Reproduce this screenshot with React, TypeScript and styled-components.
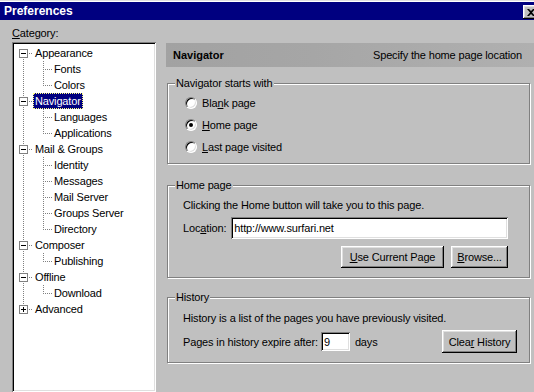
import React from 'react';
import styled, { createGlobalStyle } from 'styled-components';

const GlobalStyle = createGlobalStyle`
  html, body { margin: 0; padding: 0; background: #c0c0c0; }
  body {
    font-family: "Liberation Sans", Arial, sans-serif;
    font-size: 11px;
    letter-spacing: -0.15px;
    color: #000;
  }
  * { box-sizing: border-box; }
`;

const raised = `
  box-shadow: inset -1px -1px #000, inset 1px 1px #fff, inset -2px -2px #808080, inset 2px 2px #dfdfdf;
`;
const sunken = `
  box-shadow: inset 1px 1px #808080, inset -1px -1px #fff, inset 2px 2px #000, inset -2px -2px #dfdfdf;
`;

const dotV = 'repeating-linear-gradient(to bottom, #808080 0 1px, transparent 1px 2px)';
const dotH = 'repeating-linear-gradient(to right, #808080 0 1px, transparent 1px 2px)';

type VLine = 'full' | 'top' | 'bottom' | 'none';

function lines(x: number, w: number, v: VLine, h: boolean) {
    const layers: string[] = [];
    if (v === 'full') layers.push(`${dotV} ${x}px 0 / 1px 100% no-repeat`);
    if (v === 'top') layers.push(`${dotV} ${x}px 0 / 1px 8px no-repeat`);
    if (v === 'bottom') layers.push(`${dotV} ${x}px 8px / 1px 8px no-repeat`);
    if (h) layers.push(`${dotH} ${x}px 8px / ${w - x}px 1px no-repeat`);
    return layers.length ? layers.join(', ') : 'none';
}

const Window = styled.div`
    width: 534px;
    height: 392px;
    overflow: hidden;
    background: #c0c0c0;
    border-top: 1px solid #dfdfdf;
    display: flex;
    flex-direction: column;
`;

const TitleBar = styled.div`
    height: 19px;
    flex: none;
    border-top: 1px solid #fff;
    background: #000080;
    color: #fff;
    display: flex;
    justify-content: space-between;
    padding-left: 4px;
    font-weight: bold;
    font-size: 12px;
    letter-spacing: 0;
    line-height: 18px;
`;

const CloseButton = styled.div`
    width: 16px;
    height: 14px;
    margin: 3px -5px 0 0;
    background: #c0c0c0;
    ${raised}
    display: flex;
    align-items: center;
    justify-content: center;
`;

const Body = styled.div`
    flex: 1;
    min-height: 0;
    display: flex;
    gap: 10px;
    padding: 7px 0 0 12px;
`;

const LeftCol = styled.div`
    width: 144px;
    display: flex;
    flex-direction: column;
`;

const CategoryLabel = styled.div`
    height: 13px;
    line-height: 13px;
    margin-bottom: 2px;
`;

const TreeBox = styled.div`
    flex: 1;
    background: #fff;
    ${sunken}
    padding: 3px 0 0 5px;
`;

const TreeRow = styled.div`
    height: 16px;
    display: flex;
`;

const Cell = styled.span<{ $w: number; $x: number; $v: VLine; $h: boolean }>`
    flex: none;
    width: ${p => p.$w}px;
    height: 16px;
    background: ${p => lines(p.$x, p.$w, p.$v, p.$h)};
    display: flex;
    align-items: flex-start;
`;

const Expander = styled.svg`
    margin: 4px 0 0 2px;
    display: block;
`;

const NodeLabel = styled.span<{ $selected?: boolean }>`
    height: 16px;
    line-height: 14px;
    padding: 0 1px;
    white-space: nowrap;
    border: 1px dotted ${p => (p.$selected ? '#ffff80' : 'transparent')};
    background: ${p => (p.$selected ? '#000080' : 'transparent')};
    color: ${p => (p.$selected ? '#fff' : '#000')};
`;

const RightCol = styled.div`
    flex: 1;
    display: flex;
    flex-direction: column;
    padding-top: 16px;
`;

const Header = styled.div`
    height: 24px;
    flex: none;
    display: flex;
    align-items: center;
    justify-content: space-between;
    padding: 0 12px 0 7px;
    background: linear-gradient(to right, #a2a2a2 0%, #a6a6a6 40%, #b0b0b0 100%);
`;

const HeaderTitle = styled.span`
    font-weight: bold;
    letter-spacing: 0;
`;

const Group = styled.fieldset<{ $top: number }>`
    margin: ${p => p.$top}px 4px 0 1px;
    padding: 0;
    min-width: 0;
    border: 1px solid #808080;
    box-shadow: inset 1px 1px #fff, 1px 1px #fff;
`;

const Legend = styled.legend`
    margin-left: 7px;
    padding: 0 1px;
    line-height: 13px;
    background: #c0c0c0;
`;

const GroupInner = styled.div<{ $pad: string }>`
    padding: ${p => p.$pad};
`;

const RadioRow = styled.div`
    height: 22px;
    display: flex;
    align-items: center;
    gap: 5px;
`;

const Radio = styled.span`
    width: 12px;
    height: 12px;
    border-radius: 50%;
    border: 1px solid;
    border-color: #808080 #fff #fff #808080;
    background: #fff;
    box-shadow: inset 1px 1px #000, inset -1px -1px #dfdfdf;
    display: flex;
    align-items: center;
    justify-content: center;
`;

const RadioDot = styled.span`
    width: 4px;
    height: 4px;
    border-radius: 50%;
    background: #000;
`;

const TextLine = styled.div`
    height: 13px;
    line-height: 13px;
    white-space: nowrap;
`;

const FieldRow = styled.div<{ $top: number; $h: number }>`
    margin-top: ${p => p.$top}px;
    height: ${p => p.$h}px;
    display: flex;
    align-items: center;
    white-space: nowrap;
`;

const ButtonRow = styled.div`
    margin-top: 7px;
    display: flex;
    justify-content: flex-end;
    gap: 7px;
`;

const TextField = styled.input<{ $w?: number; $h: number }>`
    ${p => (p.$w ? `width: ${p.$w}px; flex: none;` : 'flex: 1; min-width: 0;')}
    height: ${p => p.$h}px;
    border: none;
    outline: none;
    background: #fff;
    ${sunken}
    padding: 0 0 0 3px;
    font: inherit;
    letter-spacing: inherit;
    color: #000;
`;

const Button = styled.div<{ $w: number; $h: number }>`
    width: ${p => p.$w}px;
    height: ${p => p.$h}px;
    flex: none;
    background: #c0c0c0;
    ${raised}
    display: flex;
    align-items: center;
    justify-content: center;
    white-space: nowrap;
`;

const Key = styled.span`
    text-decoration: underline;
`;

type Node = { label: string; children: string[]; selected?: boolean; collapsed?: boolean };

const tree: Node[] = [
    { label: 'Appearance', children: ['Fonts', 'Colors'] },
    { label: 'Navigator', children: ['Languages', 'Applications'], selected: true },
    { label: 'Mail & Groups', children: ['Identity', 'Messages', 'Mail Server', 'Groups Server', 'Directory'] },
    { label: 'Composer', children: ['Publishing'] },
    { label: 'Offline', children: ['Download'] },
    { label: 'Advanced', children: [], collapsed: true },
];

function ExpanderBox({ plus }: { plus?: boolean }) {
    return (
        <Expander width="9" height="9" viewBox="0 0 9 9">
            <rect x="0.5" y="0.5" width="8" height="8" fill="#fff" stroke="#808080" />
            <line x1="2" y1="4.5" x2="7" y2="4.5" stroke="#000" />
            {plus && <line x1="4.5" y1="2" x2="4.5" y2="7" stroke="#000" />}
        </Expander>
    );
}

function Tree() {
    const last = tree.length - 1;
    return (
        <TreeBox>
            {tree.map((node, i) => (
                <React.Fragment key={node.label}>
                    <TreeRow>
                        <Cell $w={16} $x={6} $v={i === 0 ? 'bottom' : i === last ? 'top' : 'full'} $h>
                            <ExpanderBox plus={node.collapsed} />
                        </Cell>
                        <NodeLabel $selected={node.selected}>{node.label}</NodeLabel>
                    </TreeRow>
                    {node.children.map((child, j) => (
                        <TreeRow key={child}>
                            <Cell $w={16} $x={6} $v={i === last ? 'none' : 'full'} $h={false} />
                            <Cell $w={19} $x={10} $v={j === node.children.length - 1 ? 'top' : 'full'} $h />
                            <NodeLabel>{child}</NodeLabel>
                        </TreeRow>
                    ))}
                </React.Fragment>
            ))}
        </TreeBox>
    );
}

const startOptions = [
    { pre: 'Bla', key: 'n', post: 'k page' },
    { pre: '', key: 'H', post: 'ome page', checked: true },
    { pre: '', key: 'L', post: 'ast page visited' },
];

export default function App(): JSX.Element {
    return (
        <>
            <GlobalStyle />
            <Window>
                <TitleBar>
                    <span>Preferences</span>
                    <CloseButton>
                        <svg width="8" height="7" viewBox="0 0 8 7">
                            <path d="M0 0h2l2 2 2-2h2L5 3.5 8 7H6L4 5 2 7H0l3-3.5z" fill="#000" />
                        </svg>
                    </CloseButton>
                </TitleBar>
                <Body>
                    <LeftCol>
                        <CategoryLabel><Key>C</Key>ategory:</CategoryLabel>
                        <Tree />
                    </LeftCol>
                    <RightCol>
                        <Header>
                            <HeaderTitle>Navigator</HeaderTitle>
                            <span>Specify the home page location</span>
                        </Header>

                        <Group $top={10}>
                            <Legend>Navigator starts with</Legend>
                            <GroupInner $pad="2px 0 5px 17px">
                                {startOptions.map(o => (
                                    <RadioRow key={o.post}>
                                        <Radio>{o.checked && <RadioDot />}</Radio>
                                        <span>{o.pre}<Key>{o.key}</Key>{o.post}</span>
                                    </RadioRow>
                                ))}
                            </GroupInner>
                        </Group>

                        <Group $top={15}>
                            <Legend>Home page</Legend>
                            <GroupInner $pad="7px 21px 9px 15px">
                                <TextLine>Clicking the Home button will take you to this page.</TextLine>
                                <FieldRow $top={5} $h={22}>
                                    <span style={{ marginRight: 5 }}>Loc<Key>a</Key>tion:</span>
                                    <TextField $h={22} defaultValue="http://www.surfari.net" readOnly />
                                </FieldRow>
                                <ButtonRow>
                                    <Button $w={103} $h={22}><span><Key>U</Key>se Current Page</span></Button>
                                    <Button $w={57} $h={22}><span><Key>B</Key>rowse...</span></Button>
                                </ButtonRow>
                            </GroupInner>
                        </Group>

                        <Group $top={13}>
                            <Legend>History</Legend>
                            <GroupInner $pad="8px 12px 9px 15px">
                                <TextLine>History is a list of the pages you have previously visited.</TextLine>
                                <FieldRow $top={5} $h={23}>
                                    <span>Pages in history expire after:</span>
                                    <TextField $w={29} $h={19} defaultValue="9" readOnly style={{ marginLeft: 3 }} />
                                    <span style={{ marginLeft: 5 }}>days</span>
                                    <Button $w={75} $h={23} style={{ marginLeft: 'auto' }}>
                                        <span>Clea<Key>r</Key> History</span>
                                    </Button>
                                </FieldRow>
                            </GroupInner>
                        </Group>
                    </RightCol>
                </Body>
            </Window>
        </>
    );
}
